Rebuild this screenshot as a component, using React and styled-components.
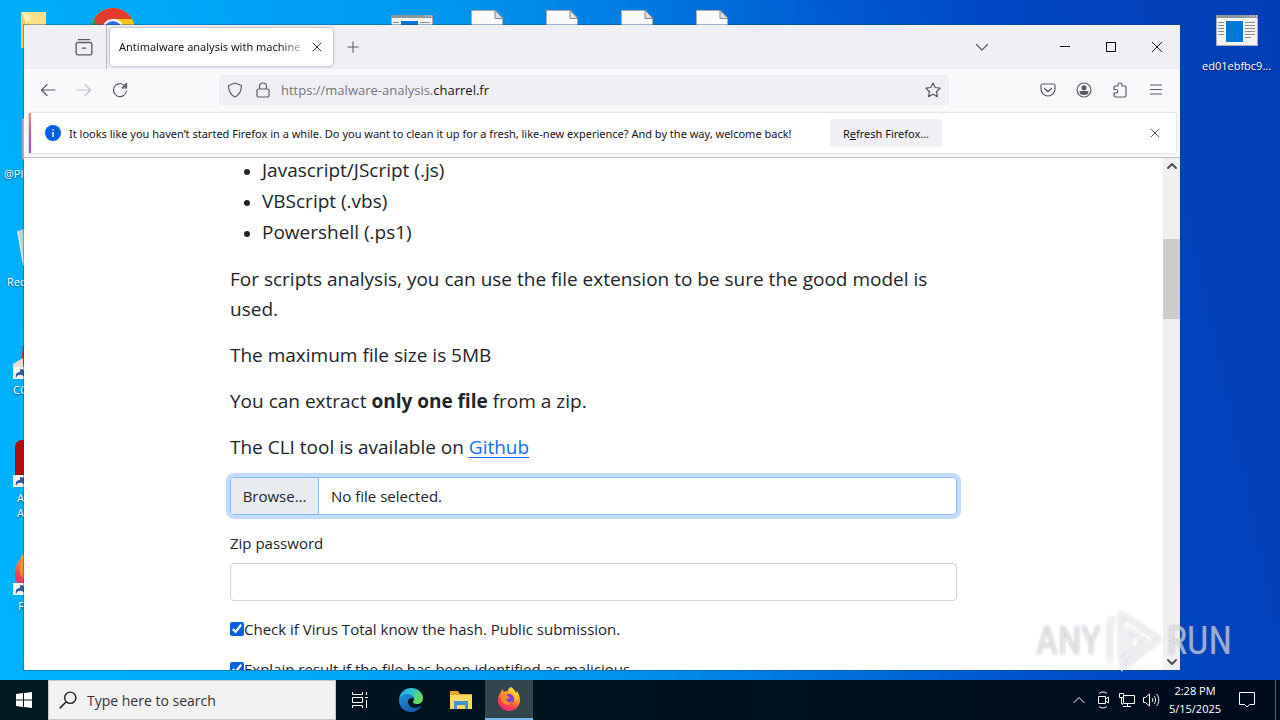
import React from "react";
import styled, { createGlobalStyle } from "styled-components";

const GlobalStyle = createGlobalStyle`
  * { box-sizing: border-box; }
  body { margin: 0; overflow: hidden; }
  button, input { font: inherit; }
  button { border: 0; padding: 0; background: none; color: inherit; }
  svg { display: block; }
`;

const Desktop = styled.div`
  height: 100vh;
  position: relative;
  display: flex;
  flex-direction: column;
  justify-content: flex-end;
  overflow: hidden;
  font-family: "Open Sans", "Noto Sans", sans-serif;
  background: linear-gradient(
    78deg,
    #00b4ff 0%,
    #00a8f8 22%,
    #0096ef 42%,
    #0078e0 56%,
    #0058ce 70%,
    #0044c0 82%,
    #043eb4 100%
  );
`;

const Shortcut = styled.div`
  position: absolute;
  left: ${(p) => p.$x}px;
  top: ${(p) => p.$y}px;
`;

const ShortcutLabel = styled.div`
  position: absolute;
  left: ${(p) => p.$x}px;
  top: ${(p) => p.$y}px;
  color: white;
  font-size: 11px;
  line-height: 15px;
  white-space: pre;
  text-align: right;
  text-shadow: 0 1px 2px rgba(0, 0, 0, 0.6);
`;

const Window = styled.section`
  position: absolute;
  top: 25px;
  right: 100px;
  bottom: 50px;
  left: 24px;
  display: flex;
  flex-direction: column;
  background: white;
  box-shadow: 0 0 0 1px rgba(20, 70, 110, 0.4);
`;

const TabStrip = styled.div`
  display: flex;
  align-items: center;
  flex: none;
  height: 44px;
  background: #f0f0f4;
  color: #15141a;
`;

const IconButton = styled.button`
  display: flex;
  align-items: center;
  justify-content: center;
  flex: none;
  width: ${(p) => p.$width || 36}px;
  height: 32px;
  color: ${(p) => p.$color || "#5b5b66"};
`;

const RecentTabs = styled.div`
  display: flex;
  align-items: center;
  justify-content: flex-end;
  width: 83px;
  height: 44px;
  padding-right: 4px;
  border-right: 1px solid #b9b9c0;
`;

const Tab = styled.div`
  display: flex;
  align-items: center;
  width: 223px;
  height: 38px;
  margin: 0 2px 0 3px;
  padding-left: 9px;
  border-radius: 4px;
  background: white;
  box-shadow: 0 0 3px rgba(128, 128, 142, 0.9);
`;

const TabTitle = styled.span`
  flex: 1;
  white-space: nowrap;
  font-family: "Noto Sans", sans-serif;
  font-size: 11px;
  line-height: 16px;
  mask-image: linear-gradient(to left, rgba(0, 0, 0, 0.3), black 20px);
`;

const Spacer = styled.div`
  flex: 1;
`;

const NavBar = styled.div`
  display: flex;
  align-items: center;
  flex: none;
  height: 42px;
  padding: 0 6px;
  background: #f9f9fb;
`;

const UrlBar = styled.div`
  display: flex;
  align-items: center;
  flex: 1;
  height: 30px;
  margin: 0 81px;
  padding: 0 2px;
  border-radius: 4px;
  background: #f0f0f4;
  font-size: 13px;
`;

const Address = styled.a`
  flex: 1;
  padding-left: 4px;
  color: #74747c;
  text-decoration: none;
  b {
    color: #15141a;
    font-weight: 400;
  }
`;

const NoticeArea = styled.div`
  flex: none;
  padding: 2px 4px 4px 5px;
  background: #f9f9fb;
  border-bottom: 1px solid #bdbdc0;
`;

const Notice = styled.div`
  display: flex;
  align-items: center;
  height: 40px;
  padding: 0 3px 0 14px;
  border-left: 2px solid;
  border-image: linear-gradient(#f0906a, #c850a0, #9850d8) 1;
  background: white;
  box-shadow: 0 0 2px rgba(58, 57, 68, 0.3);
  color: #15141a;
  font-family: "Noto Sans", sans-serif;
  font-size: 11px;
`;

const NoticeText = styled.span`
  min-width: 743px;
  margin: 0 18px 0 8px;
  white-space: nowrap;
`;

const RefreshButton = styled.button`
  flex: none;
  width: 112px;
  height: 28px;
  border-radius: 4px;
  background: #f0f0f4;
`;

const Viewport = styled.div`
  display: flex;
  flex: 1;
  min-height: 0;
`;

const Page = styled.main`
  flex: 1;
  overflow: hidden;
  color: #212529;
  font-size: 15px;
  line-height: 24px;
`;

const Container = styled.div`
  max-width: 727px;
  margin: -3px auto 0;
`;

const FileTypes = styled.ul`
  margin: 0 0 16px;
  padding-left: 32px;
  font-size: 19px;
  line-height: 31px;
  li::marker {
    font-size: 16px;
  }
`;

const Lead = styled.p`
  margin: 0 0 16px;
  font-size: 19px;
  line-height: 30px;
  &:last-of-type {
    margin-bottom: 15px;
  }
  a {
    color: #0d6efd;
    text-underline-offset: 3px;
    text-decoration-thickness: 1px;
  }
`;

const HiddenFile = styled.input`
  position: absolute;
  width: 1px;
  height: 1px;
  opacity: 0;
`;

const FilePicker = styled.label`
  display: flex;
  height: 38px;
  line-height: 36px;
  border: 1px solid #86b7fe;
  border-radius: 4px;
  box-shadow: 0 0 0 4px #c2dbfe;
`;

const Browse = styled.span`
  width: 88px;
  margin-right: 12px;
  text-align: center;
  background: #e9ecef;
  border-right: 1px solid #86b7fe;
  border-radius: 3px 0 0 3px;
`;

const FieldLabel = styled.label`
  display: block;
  margin: 16px 0 8px;
`;

const TextField = styled.input`
  display: block;
  width: 100%;
  height: 38px;
  padding: 6px 12px;
  border: 1px solid #ced4da;
  border-radius: 4px;
`;

const CheckRow = styled.label`
  display: flex;
  align-items: center;
  margin-top: 16px;
  white-space: nowrap;
  input {
    width: 14px;
    height: 14px;
    margin: 0;
    accent-color: #0060df;
  }
`;

const Scrollbar = styled.div`
  display: flex;
  flex-direction: column;
  align-items: center;
  width: 17px;
  background: #f0f0f0;
  color: #505050;
`;

const ScrollThumb = styled.div`
  width: 17px;
  height: 80px;
  margin-top: 65px;
  background: #cdcdcd;
`;

const Taskbar = styled.footer`
  position: relative;
  display: flex;
  align-items: center;
  height: 40px;
  background: linear-gradient(90deg, #001820, #00121e 50%, #000b1e);
  color: white;
`;

const TaskButton = styled.button`
  display: flex;
  align-items: center;
  justify-content: center;
  flex: none;
  width: ${(p) => p.$width || 48}px;
  height: 40px;
  background: ${(p) => (p.$active ? "#33454d" : "none")};
  border-bottom: ${(p) => (p.$active ? "2px solid #76b9ed" : "0")};
`;

const Search = styled.label`
  display: flex;
  align-items: center;
  width: 288px;
  height: 40px;
  padding-left: 10px;
  gap: 10px;
  background: #f2f2f2;
  border: 1px solid #c8c8c8;
  color: #222;
  input {
    flex: 1;
    min-width: 0;
    padding: 0;
    border: 0;
    outline: 0;
    background: none;
    font-size: 14px;
  }
  input::placeholder {
    color: #333;
    opacity: 1;
  }
`;

const Clock = styled.time`
  width: 64px;
  text-align: center;
  font-size: 11px;
  line-height: 18px;
`;

const ShowDesktop = styled.div`
  width: 5px;
  height: 40px;
  border-left: 1px solid #5a6068;
`;

const Watermark = styled.div`
  position: absolute;
  right: 48px;
  bottom: 48px;
  display: flex;
  align-items: center;
  gap: 5px;
  color: rgba(240, 243, 250, 0.6);
  font-family: "Roboto Condensed", "Roboto", sans-serif;
  font-size: 38px;
  line-height: 62px;
  text-shadow: 0 0 3px rgba(90, 90, 90, 0.4);
  svg {
    filter: drop-shadow(0 0 2px rgba(90, 90, 90, 0.4));
  }
`;

const Icon = ({ size = 16, children, width = 1.2, viewBox = "0 0 16 16" }) => (
  <svg
    width={size}
    height={size}
    viewBox={viewBox}
    fill="none"
    stroke="currentColor"
    strokeWidth={width}
    strokeLinecap="round"
    strokeLinejoin="round"
    aria-hidden="true"
  >
    {children}
  </svg>
);

const Cross = ({ size = 10 }) => (
  <Icon size={size} viewBox="0 0 10 10" width={1}>
    <path d="M1 1l8 8M9 1L1 9" />
  </Icon>
);

const DocumentIcon = () => (
  <svg width="33" height="42">
    <path d="M.5.5h24l7 8v33H.5z" fill="#fafafa" stroke="#aaa" />
    <path d="M24 .5v8h8z" fill="#dde2e8" stroke="#888" />
  </svg>
);

const ProgramIcon = () => (
  <svg width="42" height="31">
    <path d="M0 0h42v31H0z" fill="#f5f3f0" />
    <path d="M.5.5h41v30H.5z" fill="none" stroke="#a9adb3" />
    <path d="M0 0h42v3H0z" fill="#8f989f" />
    <path d="M34 1h1m2 0h1m2 0h1" stroke="#fff" />
    <path d="M10 6h17v21H10z" fill="#0078d7" />
    <path
      d="M2 7.500h6m-6 3h6m-6 3h6m-6 3h6m-6 3h6M29 7.500h10m-10 3h10m-10 3h10m-10 3h10m-10 3h10m-10 3h6"
      stroke="#8c8c8c"
    />
  </svg>
);

const LinkArrow = () => (
  <g>
    <path d="M0 0h12v12H0z" fill="#f4f4f4" />
    <path d="M3 11C2 7 4 5 7 5V2l5 1v7L9 8C6 7 4 8 3 11z" fill="#31579c" />
  </g>
);

const FolderIcon = () => (
  <svg width="25" height="36">
    <path d="M0 0h25v36H0z" fill="#ffe08a" />
    <path d="M0 0l8 8v28H0z" fill="#f3c95a" />
    <path d="M1 1h6l3 6-5 5z" fill="#ffeeb5" />
  </svg>
);

const ChromeIcon = () => (
  <svg width="46" height="46" viewBox="0 0 46 46">
    <circle cx="23" cy="23" r="22" fill="#fbc116" />
    <path d="M4 12A22 22 0 0 1 42 12H23L12 29z" fill="#e33b2e" />
    <path d="M4 12l11 19 8 14A22 22 0 0 1 4 12z" fill="#269c4b" />
    <circle cx="23" cy="23" r="11" fill="white" />
    <circle cx="23" cy="23" r="9" fill="#2e6de5" />
  </svg>
);

const FirefoxIcon = ({ size = 24 }) => (
  <svg width={size} height={size} viewBox="0 0 24 24">
    <defs>
      <linearGradient id="fox" x1=".8" y1="0" x2=".25" y2="1">
        <stop offset="0" stopColor="#fff04a" />
        <stop offset=".4" stopColor="#ff9a26" />
        <stop offset=".7" stopColor="#ff4650" />
        <stop offset="1" stopColor="#e3206f" />
      </linearGradient>
    </defs>
    <path
      d="M14 0c3 2 4 4 5 6l1-2c2 3 3 6 3 9a11 11 0 0 1-22 0c0-3 1-6 3-8l1-3 2 3c1-1 3-1 4-1 0-2 1-3 3-4z"
      fill="url(#fox)"
    />
    <circle cx="12" cy="12" r="5" fill="#7a40d8" />
    <path d="M4 7c3-1 5 0 6 2l3 1c-1 2-3 1-4 3 1 2 4 3 6 1-1 4-6 5-9 2-2-2-3-5-2-9z" fill="#ff8a2a" />
    <path d="M13 4c5 1 6 7 5 10 3-3 2-8-1-9-2-1-2-3-2-4z" fill="#ffd73a" />
  </svg>
);

const EdgeIcon = () => (
  <svg width="24" height="24" viewBox="0 0 24 24">
    <defs>
      <linearGradient id="edgeTop" x1="0" y1="0" x2="1" y2=".5">
        <stop offset="0" stopColor="#279be0" />
        <stop offset=".5" stopColor="#2ec5cf" />
        <stop offset="1" stopColor="#67dd59" />
      </linearGradient>
      <linearGradient id="edgeBody" x1="0" y1="0" x2="1" y2="1">
        <stop offset="0" stopColor="#1c94df" />
        <stop offset="1" stopColor="#0b4f9b" />
      </linearGradient>
    </defs>
    <path d="M0 11C1 4 6 0 12 0c7 0 12 5 12 10 0 4-3 6-6 6-3 0-4-1-4-2s1-1 1-3c0-2-2-4-5-4-4 0-8 1-10 4z" fill="url(#edgeTop)" />
    <path d="M0 12c1-4 5-6 9-6 4 0 6 3 6 5-2-2-6-1-6 3 0 5 6 8 13 4-2 4-6 6-10 6C5 24 0 19 0 12z" fill="url(#edgeBody)" />
  </svg>
);

const ExplorerIcon = () => (
  <svg width="22" height="20" viewBox="0 0 22 20">
    <path d="M0 1h8l2 3h12v15H0z" fill="#e9a51f" />
    <path d="M0 5h22v14H0z" fill="#ffd967" />
    <path d="M4 11h14v8h-3v-4H7v4H4z" fill="#3c96d4" />
  </svg>
);

const documents = [471, 546, 621, 696];

function App() {
  return (
    <Desktop>
      <GlobalStyle />
      <Shortcut $x={21} $y={12}><FolderIcon /></Shortcut>
      <Shortcut $x={90} $y={7}><ChromeIcon /></Shortcut>
      <Shortcut $x={391} $y={15}><ProgramIcon /></Shortcut>
      {documents.map((x) => (
        <Shortcut key={x} $x={x} $y={10}><DocumentIcon /></Shortcut>
      ))}
      <Shortcut $x={1216} $y={15}><ProgramIcon /></Shortcut>
      <ShortcutLabel $x={1202} $y={58}>ed01ebfbc9...</ShortcutLabel>
      <Shortcut $x={22} $y={118}><DocumentIcon /></Shortcut>
      <ShortcutLabel $x={4} $y={166}>@Pl</ShortcutLabel>
      <Shortcut $x={17} $y={228}>
        <svg width="16" height="38">
          <path d="M0 3l8-2h8v37H6z" fill="#b9d2e2" />
          <path d="M1 4l6 33" stroke="#e8f2f8" />
        </svg>
      </Shortcut>
      <ShortcutLabel $x={7} $y={274}>Rec</ShortcutLabel>
      <Shortcut $x={13} $y={344}>
        <svg width="16" height="36">
          <path d="M10 2l6-2v20H8z" fill="#d3232e" />
          <path d="M0 20l10-6v10H0z" fill="#f1ddd0" />
          <g transform="translate(0 23)"><LinkArrow /></g>
        </svg>
      </Shortcut>
      <ShortcutLabel $x={13} $y={382}>CC</ShortcutLabel>
      <Shortcut $x={13} $y={440}>
        <svg width="16" height="48">
          <rect x="2" width="40" height="44" rx="7" fill="#b30b00" />
          <g transform="translate(0 35)"><LinkArrow /></g>
        </svg>
      </Shortcut>
      <ShortcutLabel $x={17} $y={490}>{"A\nA"}</ShortcutLabel>
      <Shortcut $x={13} $y={550}><FirefoxIcon size={44} /></Shortcut>
      <Shortcut $x={13} $y={583}>
        <svg width="12" height="12"><LinkArrow /></svg>
      </Shortcut>
      <ShortcutLabel $x={18} $y={598}>F</ShortcutLabel>

      <Window>
        <TabStrip>
          <RecentTabs>
            <IconButton aria-label="Recent browsing">
              <Icon size={18}>
                <path d="M3 1.500h10M2.500 4h11a1.500 1.500 0 0 1 1.500 1.500v8a1.500 1.500 0 0 1-1.500 1.500h-11A1.500 1.500 0 0 1 1 13.500v-8A1.500 1.500 0 0 1 2.500 4zM6.500 9h3" />
              </Icon>
            </IconButton>
          </RecentTabs>
          <Tab>
            <TabTitle>Antimalware analysis with machine</TabTitle>
            <IconButton $width={34} $color="#333" aria-label="Close tab"><Cross /></IconButton>
          </Tab>
          <IconButton aria-label="New tab">
            <Icon size={14}><path d="M8 2v12M2 8h12" /></Icon>
          </IconButton>
          <Spacer />
          <IconButton $width={68} aria-label="List all tabs">
            <Icon><path d="M2.500 5.500L8 11l5.500-5.500" /></Icon>
          </IconButton>
          <Spacer style={{ maxWidth: 26 }} />
          <IconButton $width={46} $color="#000" aria-label="Minimize">
            <svg width="10" height="10" stroke="currentColor"><path d="M0 4.500h10" /></svg>
          </IconButton>
          <IconButton $width={46} $color="#000" aria-label="Maximize">
            <svg width="10" height="10" fill="none" stroke="currentColor"><path d="M.5.5h9v9h-9z" /></svg>
          </IconButton>
          <IconButton $width={46} $color="#000" aria-label="Close">
            <svg width="12" height="12" stroke="currentColor" strokeWidth=".9"><path d="M1 1l10 10M11 1L1 11" /></svg>
          </IconButton>
        </TabStrip>

        <NavBar>
          <IconButton aria-label="Back">
            <Icon><path d="M15 8H1.500M7 2.500L1.500 8 7 13.500" /></Icon>
          </IconButton>
          <IconButton $color="#c0c0c6" aria-label="Forward">
            <Icon><path d="M1 8h13.500M9 2.500L14.500 8 9 13.500" /></Icon>
          </IconButton>
          <IconButton aria-label="Reload">
            <Icon><path d="M14 5.500A6.500 6.500 0 1 0 14.500 9M14.500 1.500v4.500H10z" /></Icon>
          </IconButton>
          <UrlBar>
            <IconButton $width={28} aria-label="Tracking protection">
              <Icon><path d="M8 1l6.500 2.500C14.500 9 12 13 8 15 4 13 1.500 9 1.500 3.500z" /></Icon>
            </IconButton>
            <IconButton $width={28} aria-label="Connection">
              <Icon><path d="M4.500 7V4.500a3.500 3.500 0 0 1 7 0V7M3.500 7h9a1.500 1.500 0 0 1 1.500 1.500v5a1.500 1.500 0 0 1-1.500 1.500h-9A1.500 1.500 0 0 1 2 13.500v-5A1.500 1.500 0 0 1 3.500 7z" /></Icon>
            </IconButton>
            <Address href="#top">https://malware-analysis.<b>charrel.fr</b></Address>
            <IconButton $width={28} aria-label="Bookmark this page">
              <Icon><path d="M8 1l2.200 4.500 4.900.7-3.600 3.500.9 4.900L8 12.300l-4.400 2.300.9-4.900L.9 6.200l4.900-.7z" /></Icon>
            </IconButton>
          </UrlBar>
          <IconButton aria-label="Save to Pocket">
            <Icon><path d="M2.500 2h11A1.500 1.500 0 0 1 15 3.500V7A7 7 0 0 1 1 7V3.500A1.500 1.500 0 0 1 2.500 2zM4.500 6.500L8 9.500l3.500-3" /></Icon>
          </IconButton>
          <IconButton aria-label="Account">
            <Icon>
              <circle cx="8" cy="8" r="7" />
              <circle cx="8" cy="5.800" r="2" fill="currentColor" />
              <path d="M4 9.500h8c0 2-2 3-4 3s-4-1-4-3z" fill="currentColor" />
            </Icon>
          </IconButton>
          <IconButton aria-label="Extensions">
            <Icon><path d="M2 6.500V5.500A1.500 1.500 0 0 1 3.500 4H6V3a2 2 0 0 1 4 0v1h2.500A1.500 1.500 0 0 1 14 5.500v8a1.500 1.500 0 0 1-1.500 1.500h-9A1.500 1.500 0 0 1 2 13.500V11h2a1.500 1.500 0 0 0 0-3.500H2z" /></Icon>
          </IconButton>
          <IconButton aria-label="Open menu">
            <Icon><path d="M2.500 3h11M2.500 7.500h11M2.500 12h11" /></Icon>
          </IconButton>
        </NavBar>

        <NoticeArea>
          <Notice>
            <svg width="16" height="16">
              <circle cx="8" cy="8" r="8" fill="#0060df" />
              <path d="M8 4v1.500M8 7v5" stroke="white" strokeWidth="1.500" />
            </svg>
            <NoticeText>
              It looks like you haven’t started Firefox in a while. Do you want to
              clean it up for a fresh, like-new experience? And by the way,
              welcome back!
            </NoticeText>
            <RefreshButton>R<u>e</u>fresh Firefox…</RefreshButton>
            <Spacer />
            <IconButton aria-label="Dismiss"><Cross /></IconButton>
          </Notice>
        </NoticeArea>

        <Viewport>
          <Page>
            <Container>
              <FileTypes>
                <li>Javascript/JScript (.js)</li>
                <li>VBScript (.vbs)</li>
                <li>Powershell (.ps1)</li>
              </FileTypes>
              <Lead>
                For scripts analysis, you can use the file extension to be sure
                the good model is used.
              </Lead>
              <Lead>The maximum file size is 5MB</Lead>
              <Lead>You can extract <b>only one file</b> from a zip.</Lead>
              <Lead>The CLI tool is available on <a href="#github">Github</a></Lead>
              <HiddenFile type="file" id="sample" />
              <FilePicker htmlFor="sample">
                <Browse>Browse…</Browse>
                No file selected.
              </FilePicker>
              <FieldLabel htmlFor="zip-password">Zip password</FieldLabel>
              <TextField id="zip-password" type="text" />
              <CheckRow>
                <input type="checkbox" defaultChecked />
                Check if Virus Total know the hash. Public submission.
              </CheckRow>
              <CheckRow>
                <input type="checkbox" defaultChecked />
                Explain result if the file has been identified as malicious.
              </CheckRow>
            </Container>
          </Page>
          <Scrollbar>
            <Icon width={2}><path d="M4 10l4-4 4 4" /></Icon>
            <ScrollThumb />
            <Spacer />
            <Icon width={2}><path d="M4 6l4 4 4-4" /></Icon>
          </Scrollbar>
        </Viewport>
      </Window>

      <Taskbar>
        <TaskButton aria-label="Start">
          <svg width="16" height="16" fill="white">
            <path d="M0 2l7-1v6.500H0zM8 1l8-1v7.500H8zM0 8.500h7V15l-7-1zM8 8.500h8V16l-8-1z" />
          </svg>
        </TaskButton>
        <Search>
          <Icon size={18} width={1.3}><path d="M6 10L1 15M15 6A5 5 0 1 1 5 6a5 5 0 0 1 10 0z" /></Icon>
          <input type="text" placeholder="Type here to search" />
        </Search>
        <TaskButton aria-label="Task view">
          <svg width="16" height="16" fill="none" stroke="white">
            <path d="M.5 0v2.500h10V0M.5 5.500h10v5H.5zM.5 16v-2.500h10V16M14.500 0v3M14.500 8v8M13 5.500h3" />
          </svg>
        </TaskButton>
        <TaskButton $width={53} aria-label="Edge"><EdgeIcon /></TaskButton>
        <TaskButton aria-label="File Explorer"><ExplorerIcon /></TaskButton>
        <TaskButton $active aria-label="Firefox"><FirefoxIcon /></TaskButton>
        <Spacer />
        <TaskButton $width={24} aria-label="Show hidden icons">
          <svg width="12" height="8" fill="none" stroke="white"><path d="M.5 7L6 1.500 11.500 7" /></svg>
        </TaskButton>
        <TaskButton $width={24} aria-label="Meet now">
          <svg width="12" height="18" fill="none" stroke="white">
            <path d="M1.500 5.500h7v7h-7zM8.500 8l3-2v6l-3-2M2 2.500c2-2 6-2 8 0M2 15.500c2 2 6 2 8 0" />
          </svg>
        </TaskButton>
        <TaskButton $width={24} aria-label="Network">
          <svg width="16" height="14" fill="none" stroke="white">
            <path d="M4 2.500h11.500v8H4.500V5M4 13.500h8M8.500 11v2M.5.5h4v4h-4zM2.500 5v6H4" />
          </svg>
        </TaskButton>
        <TaskButton $width={24} aria-label="Volume">
          <svg width="17" height="14" fill="none" stroke="white">
            <path d="M.5 4.500h2l4-3.500v12l-4-3.500h-2zM9 5c1 1 1 3 0 4M11 3c2 2 2 6 0 8M13.500 1c3 3 3 9 0 12" />
          </svg>
        </TaskButton>
        <Clock>2:28 PM<br />5/15/2025</Clock>
        <TaskButton $width={40} aria-label="Notifications">
          <svg width="16" height="16" fill="none" stroke="white">
            <path d="M.5.5h15v12h-5L8 15l-2.500-2.500h-5z" />
          </svg>
        </TaskButton>
        <Spacer style={{ maxWidth: 8 }} />
        <ShowDesktop />
      </Taskbar>

      <Watermark>
        ANY
        <svg width="56" height="62" viewBox="0 0 56 62" fill="none" stroke="currentColor" strokeWidth="4">
          <path d="M15 50V4l38 25-36 29v-9l22-18-16-10v22" />
          <path d="M4 52V11l5-3" />
        </svg>
        RUN
      </Watermark>
    </Desktop>
  );
}

export default App;
